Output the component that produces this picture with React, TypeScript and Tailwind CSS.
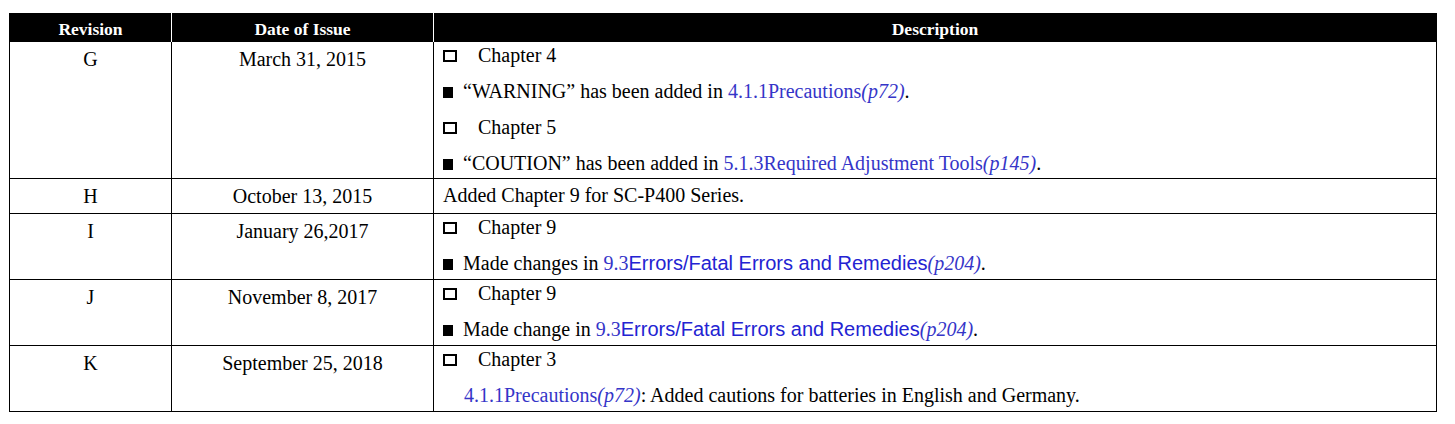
// Revision history table

const serif = 'font-["Liberation_Serif","Times_New_Roman",serif]';

function OpenBox() {
  return <span className="mr-[21px] inline-block h-[12px] w-[14px] border-2 border-black" />;
}

function FilledBox() {
  return <span className="mr-[10px] inline-block h-[11px] w-[10px] bg-black" />;
}

function Ref({ num, title, page, sans }: { num: string; title: string; page: string; sans?: boolean }) {
  return (
    <>
      <span className="text-[#3535c8]">{num}</span>
      {sans ? (
        <span className='font-["Liberation_Sans",Arial,sans-serif] text-[20px] text-[#2323d2]'>{title}</span>
      ) : (
        <span className="text-[#3535c8]">{title}</span>
      )}
      <span className="italic text-[#3535c8]">({page})</span>
    </>
  );
}

function Line({ children }: { children: React.ReactNode }) {
  return <div className="h-[26px] whitespace-nowrap leading-[26px]">{children}</div>;
}

interface RowProps {
  rev: string;
  date: string;
  height: string;
  children: React.ReactNode;
}

function Row({ rev, date, height, children }: RowProps) {
  return (
    <div className={`flex border-b border-black ${height}`}>
      <div className="w-[162px] shrink-0 border-r border-black pt-[5px] text-center text-[20px] leading-[24px]">{rev}</div>
      <div className="w-[262px] shrink-0 border-r border-black pt-[5px] text-center text-[20px] leading-[24px]">{date}</div>
      <div className="flex flex-1 flex-col gap-[10px] pl-[9px] text-[20px]">{children}</div>
    </div>
  );
}

export default function App() {
  return (
    <div className={`min-h-[424px] bg-white pt-[13px] pl-[9px] text-black ${serif}`}>
      <div className="w-[1428px] border-x border-black">
        {/* header */}
        <div className="flex h-[29px] bg-black text-[17.5px] font-bold leading-[27px] text-white">
          <div className="w-[162px] shrink-0 border-r border-white pt-[3px] text-center">Revision</div>
          <div className="w-[262px] shrink-0 border-r border-white pt-[3px] text-center">Date of Issue</div>
          <div className="flex-1 pt-[3px] text-center">Description</div>
        </div>

        <Row rev="G" date="March 31, 2015" height="h-[137px]">
          <Line><OpenBox />Chapter 4</Line>
          <Line>
            <FilledBox />“WARNING” has been added in <Ref num="4.1.1" title="Precautions" page="p72" />.
          </Line>
          <Line><OpenBox />Chapter 5</Line>
          <Line>
            <FilledBox />“COUTION” has been added in <Ref num="5.1.3" title="Required Adjustment Tools" page="p145" />.
          </Line>
        </Row>

        <Row rev="H" date="October 13, 2015" height="h-[35px]">
          <div className="h-[26px] pt-[3px] leading-[26px]">Added Chapter 9 for SC-P400 Series.</div>
        </Row>

        <Row rev="I" date="January 26,2017" height="h-[66px]">
          <Line><OpenBox />Chapter 9</Line>
          <Line>
            <FilledBox />Made changes in <Ref num="9.3" title="Errors/Fatal Errors and Remedies" page="p204" sans />.
          </Line>
        </Row>

        <Row rev="J" date="November 8, 2017" height="h-[66px]">
          <Line><OpenBox />Chapter 9</Line>
          <Line>
            <FilledBox />Made change in <Ref num="9.3" title="Errors/Fatal Errors and Remedies" page="p204" sans />.
          </Line>
        </Row>

        <Row rev="K" date="September 25, 2018" height="h-[66px]">
          <Line><OpenBox />Chapter 3</Line>
          <div className="h-[26px] whitespace-nowrap pl-[21px] leading-[26px]">
            <Ref num="4.1.1" title="Precautions" page="p72" />: Added cautions for batteries in English and Germany.
          </div>
        </Row>
      </div>
    </div>
  );
}
